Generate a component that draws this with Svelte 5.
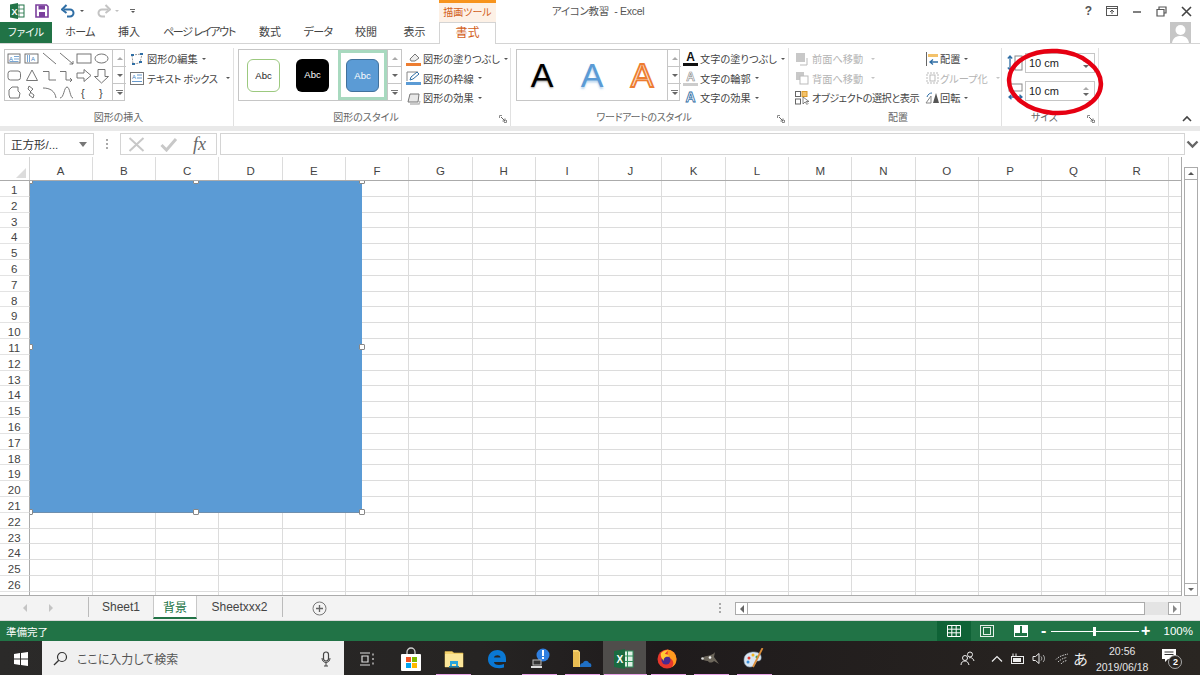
<script lang="ts">
  const tabs = [
    { label: "ホーム", w: 52, ls: -0.6 },
    { label: "挿入", w: 46, ls: 0 },
    { label: "ページ レイアウト", w: 94, ls: -1.3 },
    { label: "数式", w: 48, ls: 0 },
    { label: "データ", w: 48, ls: -0.6 },
    { label: "校閲", w: 48, ls: 0 },
    { label: "表示", w: 49, ls: 0 },
  ];
  const columns = "ABCDEFGHIJKLMNOPQR".split("");
  const rows = Array.from({ length: 27 }, (_, i) => i + 1);
  const dock = [436, 522, 565, 604, 651, 694, 737];
  const handles = [
    [0, 0], [50, 0], [100, 0],
    [0, 50], [100, 50],
    [0, 100], [50, 100], [100, 100],
  ];
</script>

{#snippet launcher()}
  <svg class="launcher" viewBox="0 0 8 8" width="8" height="8">
    <path d="M0.5 3V0.5H3M7.5 5V7.5H5" fill="none" stroke="#8a8a8a" />
    <path d="M2 2l4 4M6 3.5V6H3.5" fill="none" stroke="#666" />
  </svg>
{/snippet}

{#snippet spinner()}
  <div class="spin">
    <div class="spin-btn"><i class="up small"></i></div>
    <div class="spin-btn"><i class="down small"></i></div>
    <div class="spin-btn last"><i class="down small"></i><b></b></div>
  </div>
{/snippet}

<div class="app">
  <header class="titlebar">
    <div class="qat">
      <svg width="16" height="16" viewBox="0 0 16 16" class="xl">
        <rect x="7" y="2" width="8" height="12" fill="#fff" stroke="#217346" />
        <path d="M10 2v12M7 6h8M7 10h8" stroke="#217346" stroke-width=".8" />
        <path d="M1 1.500 9 0v16l-8-1.500z" fill="#217346" />
        <text x="2.500" y="11.500" font-size="9" font-weight="700" fill="#fff" font-family="Liberation Sans">X</text>
      </svg>
      <svg width="14" height="14" viewBox="0 0 14 14" class="save">
        <path d="M1 1h10.500L13 2.500V13H1z" fill="#fff" stroke="#7b3f9d" stroke-width="1.600" />
        <rect x="3.500" y="1.500" width="6.500" height="4" fill="#7b3f9d" />
        <rect x="4" y="8" width="6" height="5" fill="#7b3f9d" />
      </svg>
      <svg width="15" height="14" viewBox="0 0 15 14" class="undo">
        <path d="M3 5.500h6a3.500 3.500 0 0 1 0 7H6" fill="none" stroke="#2f6ea5" stroke-width="2" />
        <path d="M5.500 1 1 5.500 5.500 9" fill="none" stroke="#2f6ea5" stroke-width="2" />
      </svg>
      <i class="down tiny dark"></i>
      <svg width="15" height="14" viewBox="0 0 15 14" class="redo">
        <path d="M12 5.500H6a3.500 3.500 0 0 0 0 7h3" fill="none" stroke="#c4c4c4" stroke-width="2" />
        <path d="M9.500 1 14 5.500 9.500 9" fill="none" stroke="#c4c4c4" stroke-width="2" />
      </svg>
      <i class="down tiny"></i>
      <span class="custom"><b></b><i class="down tiny dark"></i></span>
    </div>
    <div class="context-tab">描画ツール</div>
    <div class="doc-title">アイコン教習 &nbsp;- Excel</div>
    <div class="win-buttons">
      <span class="help">?</span>
      <svg width="12" height="10" viewBox="0 0 12 10"><rect x=".5" y=".5" width="11" height="9" fill="none" stroke="#555" /><path d="M.5 2.500h11M6 8V4M4 6l2-2 2 2" fill="none" stroke="#555" /></svg>
      <svg width="10" height="10" viewBox="0 0 10 10"><path d="M1 6h8" stroke="#555" stroke-width="1.500" /></svg>
      <svg width="11" height="11" viewBox="0 0 11 11"><path d="M3 3V1h7v6H8M1 3.500h7v6.500H1z" fill="none" stroke="#555" stroke-width="1.200" /></svg>
      <svg width="11" height="11" viewBox="0 0 11 11"><path d="M1 1l9 9M10 1l-9 9" stroke="#444" stroke-width="1.600" /></svg>
    </div>
  </header>

  <nav class="tabbar">
    <div class="tab-file">ファイル</div>
    <div class="tab-gap"></div>
    {#each tabs as t}
      <div class="tab" style="width:{t.w}px;letter-spacing:{t.ls}px">{t.label}</div>
    {/each}
    <div class="tab-format">書式</div>
    <div class="account">
      <svg width="21" height="21" viewBox="0 0 21 21">
        <rect width="21" height="21" fill="#c6c6c6" />
        <circle cx="10.500" cy="8" r="5" fill="#fff" />
        <path d="M2 21c1-6 5-7 8.500-7s7.500 1 8.500 7z" fill="#fff" />
      </svg>
    </div>
  </nav>

  <section class="ribbon">
    <div class="group g-insert">
      <div class="group-body">
        <div class="gallery shapes">
          <svg width="107" height="50" viewBox="5 50 107 50" fill="none" stroke="#666" stroke-width=".9">
            <rect x="8" y="54" width="12" height="9" />
            <text x="9" y="60.500" font-size="6" fill="#3f7fbf" stroke="none" font-family="Liberation Sans">A</text>
            <path d="M14 56.500h5M14 59h5M9.500 61.500h9" stroke="#3f7fbf" stroke-width=".7" />
            <rect x="25" y="54" width="13" height="9" />
            <text x="31" y="60.500" font-size="6" fill="#3f7fbf" stroke="none" font-family="Liberation Sans">A</text>
            <path d="M27.500 55v7M29.500 55v7" stroke="#3f7fbf" stroke-width=".7" />
            <path d="M43 53l13 11M60 53l13 11M73 64h-3.500M73 64v-3" />
            <rect x="77" y="54" width="14" height="9" />
            <ellipse cx="101.500" cy="58.500" rx="6.500" ry="4.500" />
            <rect x="8" y="71" width="12.500" height="9" rx="2.500" />
            <path d="M32 70l5.500 10.500h-11z" />
            <path d="M43 71.500h6v8.500h7M60 71.500h6v8.500h6M72 80l-2-2M72 80l-2 2" />
            <path d="M77 73h7v-3.500l7 6-7 6V78h-7z" />
            <path d="M98 69.500h7v7h3.500l-7 6.500-7-6.500H98z" />
            <path d="M9 90l3-3h6v4l2 2-1 5H10l-1-3z" />
            <path d="M29 86l4 3-3 3 4 3-1 3-4-3 2-3-3-3z" />
            <path d="M43 88c7 0 12 3 13 10M60 98c4 0 4-11 7-11s3 11 6 11" />
            <text x="81" y="97" font-size="11" fill="#444" stroke="none" font-family="Liberation Sans">&#123;</text>
            <text x="99" y="97" font-size="11" fill="#444" stroke="none" font-family="Liberation Sans">&#125;</text>
          </svg>
          {@render spinner()}
        </div>
        <div class="btn-col">
          <div class="btn">
            <svg class="ico" width="14" height="14" viewBox="0 0 14 14"><path d="M2 3l10-1-2 9-7 1z" fill="none" stroke="#999" stroke-dasharray="2 1" /><path d="M1 2h3v2H1zM10 1h3v2h-3zM2 11h3v2H2zM9 9h3v2H9z" fill="#2f6ea5" /></svg>
            <span>図形の編集</span><i class="down tiny dark"></i>
          </div>
          <div class="btn">
            <svg class="ico" width="14" height="13" viewBox="0 0 14 13"><rect x=".5" y=".5" width="13" height="12" fill="#fff" stroke="#777" /><text x="2" y="7" font-size="6" fill="#3f7fbf" font-family="Liberation Sans">A</text><path d="M7 3h5M7 6h5M2 9.500h10" stroke="#3f7fbf" stroke-width=".8" /></svg>
            <span class="tight">テキスト ボックス</span><i class="down tiny dark gapped"></i>
          </div>
        </div>
      </div>
      <div class="group-label">図形の挿入</div>
    </div>

    <div class="group g-style">
      <div class="group-body">
        <div class="gallery styles">
          <div class="abc outline">Abc</div>
          <div class="abc black">Abc</div>
          <div class="abc-sel"><div class="abc blue">Abc</div></div>
          {@render spinner()}
        </div>
        <div class="btn-col">
          <div class="btn">
            <svg class="ico" width="15" height="14" viewBox="0 0 15 14"><path d="M4 7l5-5 4 4-4 3H5z" fill="#eee" stroke="#777" /><rect y="11" width="15" height="3" fill="#ed7d31" /></svg>
            <span>図形の塗りつぶし</span><i class="down tiny dark"></i>
          </div>
          <div class="btn">
            <svg class="ico" width="15" height="14" viewBox="0 0 15 14"><path d="M1 10V1h11" fill="none" stroke="#888" /><path d="M4 9l1-3 6-5 2 2-6 5z" fill="#fff" stroke="#2f6ea5" /><rect y="11" width="15" height="3" fill="#5b9bd5" /></svg>
            <span>図形の枠線</span><i class="down tiny dark"></i>
          </div>
          <div class="btn">
            <svg class="ico" width="15" height="14" viewBox="0 0 15 14"><path d="M2 11l2-8h9l-1 8z" fill="#e8e8e8" stroke="#777" /><path d="M4 13h9l1-3" fill="none" stroke="#bbb" stroke-width="1.500" /></svg>
            <span>図形の効果</span><i class="down tiny dark"></i>
          </div>
        </div>
      </div>
      <div class="group-label pad">図形のスタイル</div>
      {@render launcher()}
    </div>

    <div class="group g-art">
      <div class="group-body">
        <div class="gallery arts">
          <span class="art a-black">A</span>
          <span class="art a-blue">A</span>
          <span class="art a-orange">A</span>
          {@render spinner()}
        </div>
        <div class="btn-col">
          <div class="btn">
            <span class="ico letter"><em>A</em><u class="bar-black"></u></span>
            <span>文字の塗りつぶし</span><i class="down tiny dark"></i>
          </div>
          <div class="btn">
            <span class="ico letter"><em class="ghost">A</em><u class="bar-gray"></u></span>
            <span>文字の輪郭</span><i class="down tiny dark"></i>
          </div>
          <div class="btn">
            <span class="ico letter"><em class="glow">A</em></span>
            <span>文字の効果</span><i class="down tiny dark"></i>
          </div>
        </div>
      </div>
      <div class="group-label pad tight">ワードアートのスタイル</div>
      {@render launcher()}
    </div>

    <div class="group g-arrange">
      <div class="group-body">
        <div class="btn-col col-a">
          <div class="btn off">
            <svg class="ico" width="15" height="14" viewBox="0 0 15 14"><rect x="1" y="1" width="9" height="9" fill="#c8c8c8" /><path d="M12 6v7H5" fill="none" stroke="#bbb" /></svg>
            <span>前面へ移動</span><i class="down tiny off-c"></i>
          </div>
          <div class="btn off">
            <svg class="ico" width="15" height="14" viewBox="0 0 15 14"><rect x="1" y="1" width="8" height="8" fill="#c8c8c8" /><rect x="5" y="5" width="8" height="8" fill="#fff" stroke="#bbb" /></svg>
            <span>背面へ移動</span><i class="down tiny off-c"></i>
          </div>
          <div class="btn">
            <svg class="ico" width="15" height="14" viewBox="0 0 15 14"><rect x=".5" y=".5" width="5" height="5" fill="none" stroke="#666" /><rect x=".5" y="8" width="5" height="5" fill="none" stroke="#666" /><rect x="7" y=".5" width="5" height="5" fill="#f3c26b" stroke="#d99a2b" /><path d="M8 6v7l2-2 2 2.500 1-1-2-2h3z" fill="#fff" stroke="#555" stroke-width=".7" /></svg>
            <span class="tighter">オブジェクトの選択と表示</span>
          </div>
        </div>
        <div class="btn-col col-b">
          <div class="btn">
            <svg class="ico" width="15" height="14" viewBox="0 0 15 14"><path d="M1.500 0v14" stroke="#666" /><rect x="3" y="2" width="10" height="3" fill="#f3c26b" /><path d="M13 10H5M8 7.500 5 10l3 2.500" fill="none" stroke="#2f6ea5" stroke-width="1.300" /></svg>
            <span>配置</span><i class="down tiny dark"></i>
          </div>
          <div class="btn off">
            <svg class="ico" width="15" height="14" viewBox="0 0 15 14"><rect x="2" y="2" width="11" height="10" fill="none" stroke="#bbb" stroke-dasharray="2 1" /><rect x="5" y="4" width="5" height="6" fill="none" stroke="#bbb" /></svg>
            <span>グループ化</span><i class="down tiny off-c"></i>
          </div>
          <div class="btn">
            <svg class="ico" width="15" height="14" viewBox="0 0 15 14"><path d="M1 12l5-7v7z" fill="none" stroke="#888" /><path d="M8 12l3-10 3 10z" fill="#555" /><path d="M2 6c1-3 3-4 5-4" fill="none" stroke="#2f6ea5" /></svg>
            <span>回転</span><i class="down tiny dark"></i>
          </div>
        </div>
      </div>
      <div class="group-label">配置</div>
    </div>

    <div class="group g-size">
      <div class="size-fields">
        <div class="size-row">
          <svg width="17" height="20" viewBox="0 0 17 20"><path d="M3 3v14M.8 5.500 3 3l2.200 2.500M.8 14.500 3 17l2.200-2.500" fill="none" stroke="#2f6ea5" stroke-width="1.300" /><rect x="8" y="3" width="7" height="14" fill="#fff" stroke="#888" /></svg>
          <div class="num"><span>10 cm</span><div class="num-spin"><i class="up small"></i><i class="down small"></i></div></div>
        </div>
        <div class="size-row">
          <svg width="17" height="20" viewBox="0 0 17 20"><path d="M2 12h13M4.500 9.800 2 12l2.500 2.200M12.500 9.800 15 12l-2.500 2.200" transform="translate(0 4)" fill="none" stroke="#2f6ea5" stroke-width="1.300" /><rect x="2" y="3" width="13" height="7" fill="#fff" stroke="#888" /></svg>
          <div class="num"><span>10 cm</span><div class="num-spin"><i class="up small"></i><i class="down small"></i></div></div>
        </div>
      </div>
      <div class="group-label pad">サイズ</div>
      {@render launcher()}
    </div>

    <svg class="collapse" width="10" height="7" viewBox="0 0 10 7"><path d="M1 6l4-4 4 4" fill="none" stroke="#444" stroke-width="1.600" /></svg>

    <!-- hand-drawn annotation over the size fields -->
    <svg class="annotation" width="104" height="76" viewBox="0 0 104 76">
      <ellipse cx="51" cy="35" rx="46" ry="31" transform="rotate(4 51 35)" fill="none" stroke="#e60012" stroke-width="4.500" />
    </svg>
  </section>

  <div class="ribbon-edge"></div>

  <section class="formula">
    <div class="namebox"><span>正方形/...</span><i class="down"></i></div>
    <div class="dots"><b></b><b></b><b></b></div>
    <div class="fx-box">
      <svg width="17" height="15" viewBox="0 0 17 15"><path d="M1.500 1l14 13M15.500 1l-14 13" stroke="#c8c8c8" stroke-width="2" /></svg>
      <svg width="18" height="15" viewBox="0 0 18 15"><path d="M1.500 8l5 5L16 2" fill="none" stroke="#c8c8c8" stroke-width="3" /></svg>
      <span class="fx">fx</span>
    </div>
    <div class="formula-input"></div>
    <svg class="formula-caret" width="13" height="9" viewBox="0 0 13 9"><path d="M1.500 1.500 6.500 6.500l5-5" fill="none" stroke="#666" stroke-width="2.400" /></svg>
  </section>

  <main class="sheet">
    <div class="grid-wrap">
      <div class="col-head">
        <div class="corner"><svg width="10" height="10" viewBox="0 0 10 10"><path d="M10 0v10H0z" fill="#dcdcdc" /></svg></div>
        {#each columns as c}
          <div class="col">{c}</div>
        {/each}
        <div class="col rest"></div>
      </div>
      <div class="grid">
        {#each rows as r}
          <div class="row">
            <div class="row-head">{r < 27 ? r : ""}</div>
            {#each columns as c}
              <div class="cell"></div>
            {/each}
            <div class="cell rest"></div>
          </div>
        {/each}
      </div>
      <!-- cells pane: clips the handles at the header edges -->
      <div class="pane">
        <div class="shape">
          {#each handles as h}
            <span class="handle" style="left:{h[0]}%;top:{h[1]}%"></span>
          {/each}
        </div>
      </div>
    </div>
    <aside class="vscroll">
      <div class="sb-btn"><i class="up small dark"></i></div>
      <div class="sb-track"></div>
      <div class="sb-btn"><i class="down small dark"></i></div>
    </aside>
  </main>

  <section class="sheetbar">
    <div class="nav-arrows">
      <i class="left"></i>
      <i class="right"></i>
    </div>
    <div class="sheet-tab sep">Sheet1</div>
    <div class="sheet-tab active">背景</div>
    <div class="sheet-tab sep-r">Sheetxxx2</div>
    <div class="add-sheet">
      <svg width="15" height="15" viewBox="0 0 15 15"><circle cx="7.500" cy="7.500" r="6.500" fill="none" stroke="#777" /><path d="M7.500 4v7M4 7.500h7" stroke="#666" stroke-width="1.300" /></svg>
    </div>
    <div class="dots bar-dots"><b></b><b></b><b></b></div>
    <div class="hscroll">
      <div class="sb-btn h"><i class="left dark"></i></div>
      <div class="h-thumb"></div>
      <div class="h-track"></div>
      <div class="sb-btn h"><i class="right dark"></i></div>
    </div>
  </section>

  <footer class="status">
    <span class="ready">準備完了</span>
    <div class="view active-view">
      <svg width="14" height="12" viewBox="0 0 14 12"><path d="M.5.500h13v11H.5zM.5 4.200h13M.5 7.800h13M4.800.500v11M9.200.500v11" fill="none" stroke="#fff" /></svg>
    </div>
    <div class="view">
      <svg width="14" height="12" viewBox="0 0 14 12"><rect x=".5" y=".5" width="13" height="11" fill="none" stroke="#e4efe8" /><rect x="3.500" y="2.500" width="7" height="7" fill="none" stroke="#e4efe8" /></svg>
    </div>
    <div class="view">
      <svg width="14" height="12" viewBox="0 0 14 12"><rect x=".5" y=".5" width="13" height="11" fill="none" stroke="#fff" /><path d="M1 1h5v7H1zM8 1h5v7H8z" fill="#fff" /></svg>
    </div>
    <span class="zoom-sign">-</span>
    <div class="slider"><b></b></div>
    <span class="zoom-sign">+</span>
    <span class="pct">100%</span>
  </footer>

  <div class="taskbar">
    <div class="start">
      <svg width="14" height="14" viewBox="0 0 14 14"><path d="M0 2l6-.9V6.500H0zM7 1l7-1v6.500H7zM0 7.500h6v5.400l-6-.9zM7 7.500h7V14l-7-1z" fill="#fff" /></svg>
    </div>
    <div class="search">
      <svg width="15" height="15" viewBox="0 0 15 15"><circle cx="9" cy="6" r="4.500" fill="none" stroke="#333" stroke-width="1.200" /><path d="M5.800 9.200 1 14" stroke="#333" stroke-width="1.300" /></svg>
      <span>ここに入力して検索</span>
      <svg class="mic" width="10" height="16" viewBox="0 0 10 16"><rect x="2.500" y="1" width="5" height="9" rx="2.500" fill="none" stroke="#444" stroke-width="1.200" /><path d="M1 7c0 6 8 6 8 0M5 12v3M3 15h4" fill="none" stroke="#444" /></svg>
    </div>
    <div class="task t-view">
      <svg width="16" height="14" viewBox="0 0 16 14"><path d="M1 1h10M1 13h10M3 4h6v6H3zM14 1.500v2M14 6v2M14 10.500v2" fill="none" stroke="#ddd" stroke-width="1.200" /></svg>
    </div>
    <div class="task t-store">
      <svg width="20" height="24" viewBox="0 0 20 24">
        <path d="M6 7V5a4 4 0 0 1 8 0v2" fill="none" stroke="#cfcfcf" stroke-width="1.300" />
        <rect y="7" width="20" height="17" rx="1" fill="#fff" />
        <rect x="5" y="10" width="5" height="5" fill="#f25022" /><rect x="11" y="10" width="5" height="5" fill="#7fba00" />
        <rect x="5" y="16" width="5" height="5" fill="#00a4ef" /><rect x="11" y="16" width="5" height="5" fill="#ffb900" />
      </svg>
    </div>
    <div class="task t-a">
      <svg width="20" height="18" viewBox="0 0 20 18">
        <path d="M1 3V1.500h7L10 3h9v14H1z" fill="#f5d46f" stroke="#d9b24c" stroke-width=".6" />
        <rect x="1" y="4" width="18" height="13" fill="#fbe69a" />
        <path d="M6 11h8v5h-2v-2H8v2H6z" fill="#2aa5dc" />
        <rect x="5" y="16" width="10" height="1.500" fill="#1c7fb2" />
      </svg>
    </div>
    <div class="task">
      <svg width="20" height="20" viewBox="0 0 20 20"><path d="M18 13H7c0 3 5 4 10 2v3.500C10 20.500 1 18 1 10.500 1 4 6 1 10.500 1 16 1 19 5 19 10v3zM7 8.500h6.500c0-3-6-3-6.500 0z" fill="#0a78d4" /></svg>
    </div>
    <div class="task">
      <svg width="20" height="21" viewBox="0 0 20 21">
        <circle cx="13" cy="7" r="6.500" fill="#2f7fe0" />
        <rect x="12" y="2" width="2" height="6" fill="#fff" /><rect x="12" y="9" width="2" height="2" fill="#fff" />
        <rect x="3" y="12" width="8" height="5" fill="#333" stroke="#bbb" />
        <rect x="1" y="18" width="11" height="2" fill="#ddd" />
      </svg>
    </div>
    <div class="task t-onedrive">
      <svg width="20" height="20" viewBox="0 0 20 20">
        <path d="M1 1h5l2 2v15H1z" fill="#f3cf6d" />
        <rect x="1" y="3" width="6" height="15" fill="#e9bd52" />
        <path d="M8 18c0-3 1-4 3-4 1-3 5-3 6 0 2 0 3 2 2 4z" fill="#1f6fc4" />
      </svg>
    </div>
    <div class="task t-active">
      <svg width="20" height="20" viewBox="0 0 20 20">
        <rect x="8" y="2" width="11" height="16" fill="#dff0e5" stroke="#2f8f5b" />
        <path d="M13.500 2v16M8 7h11M8 12.500h11" stroke="#2f8f5b" />
        <path d="M0 2 11 0v20L0 18z" fill="#1b6b40" />
        <text x="2.500" y="13.500" font-size="10" font-weight="700" fill="#fff" font-family="Liberation Sans">X</text>
      </svg>
    </div>
    <div class="task">
      <svg width="20" height="20" viewBox="0 0 20 20">
        <circle cx="10" cy="10" r="9.500" fill="#e8372c" />
        <path d="M10 .500a9.500 9.500 0 0 1 9.500 9.500c0 4-2 7-5 8.500 2-2 2.500-5 1-7-1-2-4-3-6-2 1-3 2-6 .5-9z" fill="#ff9a1f" />
        <circle cx="9" cy="11" r="4.500" fill="#4a2a8f" />
        <path d="M4 4c2-2 4-3 7-3-1 2-3 3-3 4 2 0 4 1 4 3-3-1-6 1-5 4-2-2-4-5-3-8z" fill="#ffc933" />
      </svg>
    </div>
    <div class="task">
      <svg width="20" height="16" viewBox="0 0 20 16">
        <path d="M6 5c3-1 6-1 8-4l-1 5 5 7-5-3c-2 2-5 2-6 0-1 0-3 0-6-2 1-2 3-3 5-3z" fill="#6d675c" />
        <circle cx="9" cy="6.500" r="1.300" fill="#fff" /><circle cx="1.500" cy="7.500" r="1.300" fill="#ddd" />
      </svg>
    </div>
    <div class="task">
      <svg width="21" height="21" viewBox="0 0 21 21">
        <path d="M1 12C1 6 6 4 11 4c5 0 8 3 7 7-1 3-4 1-5 3-1 3-3 5-6 5-4 0-6-3-6-7z" fill="#d9e6f2" stroke="#8aa3b8" stroke-width=".6" />
        <circle cx="6" cy="10" r="1.500" fill="#e03c31" /><circle cx="10" cy="7" r="1.500" fill="#f2b61f" /><circle cx="5" cy="14" r="1.500" fill="#3b8fd8" /><circle cx="14" cy="9" r="1.500" fill="#46a546" />
        <path d="M19.500 0 10 19" stroke="#d98d3a" stroke-width="1.800" />
      </svg>
    </div>
    <div class="tray">
      <svg class="t-people" width="15" height="15" viewBox="0 0 15 15"><circle cx="10" cy="3.500" r="2.500" fill="none" stroke="#eee" /><circle cx="5" cy="7" r="2.500" fill="none" stroke="#eee" /><path d="M1 14c0-3 2-4 4-4s3 1 4 4M9 7c2-1 4 0 5 3" fill="none" stroke="#eee" /></svg>
      <svg class="t-up" width="12" height="7" viewBox="0 0 12 7"><path d="M1 6.500 6 1.500l5 5" fill="none" stroke="#eee" stroke-width="1.200" /></svg>
      <svg class="t-batt" width="14" height="12" viewBox="0 0 14 12"><rect x=".5" y="3.500" width="12" height="7" fill="none" stroke="#eee" /><rect x="2" y="5" width="8" height="4" fill="#eee" /><path d="M2 .5v3M5 .5v3" stroke="#eee" /></svg>
      <svg class="t-vol" width="14" height="13" viewBox="0 0 14 13"><path d="M1 4.500h2.500L7 1.500v10l-3.500-3H1z" fill="none" stroke="#eee" /><path d="M9 4.500c1 1 1 3 0 4M11 3c2 2 2 5 0 7" fill="none" stroke="#bbb" /></svg>
      <svg class="t-wifi" width="14" height="13" viewBox="0 0 14 13"><path d="M1 7.500C4 4 9 3 13 2M3 10c2-2 5-4 9-4.500M6 12c1-1.500 3-3 6-3.500" fill="none" stroke="#cfcfcf" stroke-dasharray="1.500 1" /></svg>
      <span class="ime">あ</span>
      <div class="clock"><span>20:56</span><span>2019/06/18</span></div>
      <div class="notify">
        <svg width="14" height="13" viewBox="0 0 14 13"><path d="M0 0h14v10H6l-3 3v-3H0z" fill="#fff" /><path d="M2.500 3h9M2.500 5.500h9" stroke="#333" /></svg>
        <span>2</span>
      </div>
    </div>
    {#each dock as x}
      <span class="dock-mark" style="left:{x}px;width:{x === 604 ? 43 : 35}px"></span>
    {/each}
  </div>
</div>

<style>
  :global(body) {
    margin: 0;
    background: #fff;
  }

  .app {
    position: relative;
    width: 1200px;
    height: 675px;
    overflow: hidden;
    display: flex;
    flex-direction: column;
    background: #fff;
    color: #444;
    font-family: "Liberation Sans", "Noto Sans CJK JP", sans-serif;
    font-size: 11px;
    font-feature-settings: "palt";
  }

  /* small triangles */
  i.down,
  i.up,
  i.left,
  i.right {
    display: inline-block;
    width: 0;
    height: 0;
    flex: none;
  }
  i.down {
    border: 4px solid transparent;
    border-top: 5px solid #777;
    border-bottom: 0;
  }
  i.down.tiny {
    border-width: 2px 2px 0;
    border-top-color: #c0c0c0;
    border-style: solid;
    border-left-color: transparent;
    border-right-color: transparent;
    margin-left: 4px;
  }
  i.down.tiny.dark {
    border-top-color: #555;
  }
  i.down.tiny.off-c {
    border-top-color: #c4c4c4;
    margin-left: 8px;
  }
  i.down.tiny.gapped {
    margin-left: 8px;
  }
  i.down.small {
    border-width: 3px 3px 0;
    border-top-color: #666;
  }
  i.up.small {
    border-left: 3px solid transparent;
    border-right: 3px solid transparent;
    border-bottom: 3px solid #aaa;
  }
  i.up.small.dark {
    border-bottom-color: #555;
  }
  i.left,
  i.right {
    border-top: 4px solid transparent;
    border-bottom: 4px solid transparent;
  }
  i.left {
    border-right: 4px solid #c4c4c4;
  }
  i.right {
    border-left: 4px solid #c4c4c4;
  }
  i.left.dark {
    border-right-color: #666;
  }
  i.right.dark {
    border-left-color: #888;
  }

  /* title bar */
  .titlebar {
    height: 22px;
    display: flex;
    flex: none;
    align-items: stretch;
  }
  .qat {
    width: 439px;
    display: flex;
    align-items: center;
    padding-left: 9px;
    box-sizing: border-box;
  }
  .save {
    margin-left: 10px;
  }
  .undo {
    margin-left: 12px;
  }
  .redo {
    margin-left: 12px;
  }
  .custom {
    display: inline-flex;
    flex-direction: column;
    align-items: center;
    gap: 1px;
    margin-left: 11px;
  }
  .custom b {
    width: 5px;
    height: 1px;
    background: #666;
  }
  .custom i.down.tiny {
    margin-left: 0;
  }
  .context-tab {
    width: 57px;
    box-sizing: border-box;
    border-top: 3px solid #f7941d;
    background: #fdf1e6;
    color: #d2601a;
    text-align: center;
    line-height: 19px;
    font-size: 10px;
  }
  .doc-title {
    margin-left: 56px;
    line-height: 22px;
    color: #555;
    font-size: 10.500px;
    letter-spacing: -0.3px;
    white-space: nowrap;
  }
  .win-buttons {
    margin-left: auto;
    display: flex;
    align-items: center;
    gap: 0;
    padding-right: 8px;
  }
  .win-buttons > * {
    margin-left: 14px;
  }
  .help {
    font-weight: 700;
    font-size: 12px;
    color: #555;
  }

  /* tabs */
  .tabbar {
    height: 22px;
    flex: none;
    display: flex;
    align-items: stretch;
    box-sizing: border-box;
    border-bottom: 1px solid #d4d4d4;
    font-size: 11px;
  }
  .tab-file {
    width: 52px;
    height: 21px;
    background: #217346;
    color: #fff;
    text-align: center;
    line-height: 21px;
    font-size: 10.500px;
  }
  .tab-gap {
    width: 2px;
  }
  .tab {
    text-align: center;
    line-height: 21px;
    color: #444;
    white-space: nowrap;
  }
  .tab-format {
    width: 57px;
    height: 22px;
    box-sizing: border-box;
    border: 1px solid #d4d4d4;
    border-bottom: 0;
    background: #fff;
    color: #d2601a;
    text-align: center;
    line-height: 21px;
    font-size: 12px;
  }
  .account {
    margin-left: auto;
    margin-right: 9px;
    height: 21px;
  }

  /* ribbon */
  .ribbon {
    position: relative;
    height: 82px;
    flex: none;
    display: flex;
    box-sizing: border-box;
  }
  .group {
    position: relative;
    height: 78px;
    margin-top: 4px;
    box-sizing: border-box;
    border-right: 1px solid #e1e1e1;
    display: flex;
    flex-direction: column;
    flex: none;
  }
  .g-insert {
    width: 234px;
    padding-left: 4px;
  }
  .g-style {
    width: 277px;
    padding-left: 4px;
  }
  .g-art {
    width: 278px;
    padding-left: 5px;
  }
  .g-arrange {
    width: 213px;
    padding-left: 6px;
  }
  .g-size {
    width: 97px;
    padding-left: 5px;
  }
  .group-body {
    display: flex;
    height: 63px;
    gap: 4px;
    padding-top: 1px;
    box-sizing: border-box;
  }
  .g-insert .group-body {
    gap: 5px;
  }
  .g-art .group-body {
    gap: 3px;
  }
  .group-label {
    text-align: center;
    color: #666;
    font-size: 10px;
    line-height: 14px;
  }
  .group-label.pad {
    padding-right: 16px;
  }
  .group-label.tight {
    letter-spacing: -0.3px;
  }
  .launcher {
    position: absolute;
    right: 3px;
    bottom: 3px;
  }
  .gallery {
    position: relative;
    height: 52px;
    box-sizing: border-box;
    border: 1px solid #c6c6c6;
    display: flex;
    align-items: center;
    flex: none;
  }
  .shapes {
    width: 121px;
  }
  .shapes > svg {
    flex: none;
  }
  .spin {
    margin-left: auto;
    width: 13px;
    height: 50px;
    border-left: 1px solid #c6c6c6;
    display: flex;
    flex-direction: column;
    flex: none;
  }
  .spin-btn {
    flex: 1;
    display: flex;
    flex-direction: column;
    align-items: center;
    justify-content: center;
    gap: 1px;
    border-bottom: 1px solid #c6c6c6;
  }
  .spin-btn.last {
    border-bottom: 0;
    flex-direction: column-reverse;
  }
  .spin-btn b {
    width: 7px;
    height: 1px;
    background: #777;
  }
  .styles {
    width: 164px;
    padding-left: 8px;
  }
  .abc {
    width: 33px;
    height: 33px;
    box-sizing: border-box;
    border-radius: 6px;
    text-align: center;
    line-height: 31px;
    font-size: 9.500px;
    flex: none;
  }
  .outline {
    border: 1px solid #9cc97f;
    color: #222;
  }
  .black {
    background: #000;
    color: #fff;
    margin-left: 16px;
  }
  .abc-sel {
    margin-left: 9px;
    width: 49px;
    height: 50px;
    box-sizing: border-box;
    border: 3px solid #a8d9bf;
    display: flex;
    align-items: center;
    justify-content: center;
    flex: none;
  }
  .blue {
    background: #5b9bd5;
    border: 1px solid #41719c;
    color: #fff;
  }
  .btn-col {
    display: flex;
    flex-direction: column;
    flex: none;
  }
  .btn {
    height: 19.500px;
    display: flex;
    align-items: center;
    white-space: nowrap;
    color: #444;
    font-size: 10.200px;
  }
  .btn.off {
    color: #b4b4b4;
  }
  .tight {
    letter-spacing: -0.4px;
  }
  .tighter {
    letter-spacing: -0.5px;
  }
  .ico {
    flex: none;
    margin-right: 2px;
  }
  .g-insert .ico {
    margin-right: 3px;
  }
  .g-art .gallery {
    width: 164px;
    padding-left: 0;
  }
  .art {
    width: 50px;
    text-align: center;
    font-size: 34px;
    font-weight: 400;
    line-height: 50px;
    flex: none;
    font-family: "Liberation Sans", sans-serif;
  }
  .a-black {
    color: #000;
    text-shadow: 0 1px 2px rgba(0, 0, 0, 0.4);
  }
  .a-blue {
    color: #5b9bd5;
    text-shadow: 0 2px 2px rgba(91, 155, 213, 0.4);
  }
  .a-orange {
    color: #fbe3d3;
    -webkit-text-stroke: 1.800px #ed7d31;
  }
  .letter {
    width: 15px;
    height: 15px;
    display: inline-flex;
    flex-direction: column;
    align-items: center;
  }
  .letter em {
    font-style: normal;
    font-size: 12px;
    font-weight: 700;
    line-height: 12px;
    color: #111;
  }
  .letter em.ghost {
    color: #fff;
    -webkit-text-stroke: 0.600px #888;
  }
  .letter em.glow {
    color: #fff;
    -webkit-text-stroke: 0.800px #2f6ea5;
    font-size: 14px;
    line-height: 15px;
  }
  .letter u {
    display: block;
    width: 15px;
    height: 3px;
  }
  .bar-black {
    background: #111;
  }
  .bar-gray {
    background: #ccc;
  }
  .col-a {
    width: 127px;
  }
  .g-arrange .group-body {
    gap: 3px;
  }
  .col-b .ico {
    margin-right: 0;
  }
  .size-fields {
    height: 63px;
    display: flex;
    flex-direction: column;
    gap: 8px;
    padding-top: 5px;
    box-sizing: border-box;
  }
  .size-row {
    display: flex;
    align-items: center;
    gap: 1px;
  }
  .num {
    width: 70px;
    height: 20px;
    box-sizing: border-box;
    border: 1px solid #c6c6c6;
    display: flex;
    align-items: center;
    justify-content: space-between;
    padding: 0 5px 0 3px;
    color: #222;
    font-size: 11px;
  }
  .num-spin {
    display: flex;
    flex-direction: column;
    gap: 3px;
    align-items: center;
  }
  .collapse {
    position: absolute;
    right: 8px;
    bottom: 4px;
  }
  .annotation {
    position: absolute;
    left: 1004px;
    top: 3px;
  }
  .ribbon-edge {
    height: 5px;
    flex: none;
    background: #e9e9e9;
  }

  /* formula bar */
  .formula {
    height: 26px;
    flex: none;
    display: flex;
    align-items: center;
    padding: 0 0 0 4px;
    box-sizing: border-box;
  }
  .namebox {
    width: 90px;
    height: 22px;
    box-sizing: border-box;
    border: 1px solid #d4d4d4;
    display: flex;
    align-items: center;
    justify-content: space-between;
    padding: 0 6px;
    color: #333;
    font-size: 11.500px;
    flex: none;
  }
  .dots {
    display: flex;
    flex-direction: column;
    gap: 2px;
    width: 26px;
    align-items: center;
    flex: none;
  }
  .dots b {
    width: 2px;
    height: 2px;
    background: #aaa;
  }
  .fx-box {
    width: 97px;
    height: 22px;
    box-sizing: border-box;
    border: 1px solid #d4d4d4;
    display: flex;
    align-items: center;
    gap: 15px;
    padding-left: 7px;
    flex: none;
  }
  .fx-box svg {
    flex: none;
  }
  .fx {
    font-family: "Liberation Serif", serif;
    font-style: italic;
    font-size: 18px;
    color: #666;
  }
  .formula-input {
    margin-left: 3px;
    width: 965px;
    height: 22px;
    box-sizing: border-box;
    border: 1px solid #d4d4d4;
    flex: none;
  }
  .formula-caret {
    margin-left: -1px;
    padding-left: 2px;
    flex: none;
  }

  /* sheet */
  .sheet {
    height: 439px;
    flex: none;
    display: flex;
  }
  .grid-wrap {
    position: relative;
    width: 1182px;
    flex: none;
    overflow: hidden;
    border-right: 1px solid #ababab;
    border-bottom: 1px solid #ababab;
    box-sizing: border-box;
  }
  .col-head {
    height: 24px;
    display: flex;
    box-sizing: border-box;
    border-bottom: 1px solid #ababab;
  }
  .corner {
    width: 29.500px;
    flex: none;
    display: flex;
    align-items: flex-end;
    justify-content: flex-end;
    padding: 0 3px 2px 0;
    box-sizing: border-box;
    border-right: 1px solid #d4d4d4;
  }
  .col {
    width: 63.300px;
    flex: none;
    box-sizing: border-box;
    border-right: 1px solid #dcdcdc;
    text-align: center;
    padding-top: 5px;
    line-height: 18px;
    color: #444;
    font-size: 11.500px;
  }
  .col.rest {
    border-right: 0;
    width: 14px;
  }
  .row {
    height: 15.800px;
    display: flex;
  }
  .row-head {
    width: 29.500px;
    flex: none;
    box-sizing: border-box;
    border-right: 1px solid #ababab;
    border-bottom: 1px solid #e3e3e3;
    text-align: center;
    padding-top: 2px;
    line-height: 14px;
    font-size: 11.500px;
    color: #444;
  }
  .cell {
    width: 63.300px;
    flex: none;
    box-sizing: border-box;
    border-right: 1px solid #dcdcdc;
    border-bottom: 1px solid #dcdcdc;
  }
  .cell.rest {
    width: 14px;
    border-right: 0;
  }
  .pane {
    position: absolute;
    left: 30px;
    top: 24px;
    right: 0;
    bottom: 0;
    overflow: hidden;
  }
  .shape {
    position: relative;
    width: 332px;
    height: 332px;
    background: #5b9bd5;
    box-sizing: border-box;
    border-bottom: 1px solid #6f8fae;
  }
  .handle {
    position: absolute;
    width: 6px;
    height: 6px;
    margin: -3px 0 0 -3px;
    box-sizing: border-box;
    background: #fff;
    border: 1px solid #888;
    border-radius: 1px;
  }
  .vscroll {
    width: 18px;
    flex: none;
    margin-top: 10px;
    padding: 0 2px 0 2px;
    box-sizing: border-box;
    display: flex;
    flex-direction: column;
  }
  .sb-btn {
    height: 13px;
    flex: none;
    box-sizing: border-box;
    border: 1px solid #ababab;
    display: flex;
    align-items: center;
    justify-content: center;
    background: #fff;
  }
  .sb-track {
    flex: 1;
    box-sizing: border-box;
    border-left: 1px solid #ababab;
    border-right: 1px solid #ababab;
  }

  /* sheet tabs */
  .sheetbar {
    height: 25px;
    flex: none;
    display: flex;
    align-items: stretch;
    background: #f3f3f3;
    border-bottom: 1px solid #d8d8d8;
    box-sizing: border-box;
  }
  .nav-arrows {
    width: 88px;
    flex: none;
    box-sizing: border-box;
    padding-left: 23px;
    display: flex;
    align-items: center;
    gap: 22px;
  }
  .sheet-tab {
    display: flex;
    align-items: center;
    justify-content: center;
    color: #444;
    font-size: 12px;
    flex: none;
    height: 20px;
    margin-top: 1px;
  }
  .sep {
    width: 64px;
    border-left: 1px solid #bbb;
  }
  .active {
    width: 44px;
    height: 24px;
    margin-top: -1px;
    box-sizing: border-box;
    background: #fff;
    color: #217346;
    border-left: 1px solid #c8c8c8;
    border-right: 1px solid #c8c8c8;
    border-bottom: 2px solid #217346;
  }
  .sep-r {
    width: 85px;
    border-right: 1px solid #bbb;
  }
  .add-sheet {
    width: 72px;
    flex: none;
    display: flex;
    align-items: center;
    justify-content: center;
  }
  .bar-dots {
    flex: none;
    width: 26px;
    margin-left: 352px;
    justify-content: center;
  }
  .hscroll {
    margin-left: 2px;
    margin-top: 6px;
    height: 13px;
    flex: none;
    display: flex;
  }
  .sb-btn.h {
    width: 13px;
  }
  .h-thumb {
    width: 397px;
    box-sizing: border-box;
    background: #fff;
    border: 1px solid #ababab;
    border-left: 0;
  }
  .h-track {
    width: 23px;
    background: #e4e4e4;
  }

  /* status */
  .status {
    height: 20px;
    flex: none;
    background: #217346;
    color: #fff;
    display: flex;
    align-items: center;
    font-size: 10.500px;
  }
  .ready {
    margin-left: 6px;
    margin-right: auto;
  }
  .view {
    width: 33.500px;
    height: 20px;
    display: flex;
    align-items: center;
    justify-content: center;
  }
  .active-view {
    background: #0f6236;
  }
  .zoom-sign {
    font-size: 16px;
    font-weight: 700;
    width: 12px;
    text-align: center;
    line-height: 18px;
  }
  .slider {
    width: 88px;
    height: 1px;
    background: #fff;
    margin: 0 1px;
    position: relative;
  }
  .slider b {
    position: absolute;
    left: 42px;
    top: -4px;
    width: 3px;
    height: 9px;
    background: #fff;
  }
  .pct {
    margin: 0 7px 0 12px;
    font-size: 11.500px;
  }

  /* taskbar */
  .taskbar {
    position: relative;
    height: 35px;
    flex: none;
    display: flex;
    align-items: center;
    background: linear-gradient(90deg, #2b2a29, #262423 40%, #1f1b1c 55%, #2a2622);
    color: #eee;
  }
  .start {
    width: 42px;
    height: 35px;
    display: flex;
    align-items: center;
    justify-content: center;
    flex: none;
  }
  .search {
    width: 302px;
    height: 35px;
    box-sizing: border-box;
    background: #f0f0f0;
    display: flex;
    align-items: center;
    padding-left: 11px;
    color: #444;
    font-size: 12px;
    flex: none;
  }
  .search span {
    margin-left: 9px;
    color: #555;
  }
  .mic {
    margin-left: auto;
    margin-right: 13px;
  }
  .task {
    width: 43.200px;
    height: 35px;
    display: flex;
    align-items: center;
    justify-content: center;
    flex: none;
  }
  .t-view {
    width: 45px;
  }
  .t-store {
    width: 43px;
  }
  .t-onedrive {
    width: 41px;
  }
  .t-active {
    background: #4f4d4b;
  }
  .tray {
    flex: 1;
    display: flex;
    align-items: center;
    height: 35px;
    min-width: 0;
  }
  .tray > svg {
    flex: none;
  }
  .t-people {
    margin-left: 185px;
  }
  .t-up {
    margin-left: 16px;
  }
  .t-batt {
    margin-left: 8px;
  }
  .t-vol {
    margin-left: 7px;
  }
  .t-wifi {
    margin-left: 9px;
  }
  .ime {
    margin-left: 4px;
    font-size: 15px;
    color: #eee;
  }
  .clock {
    margin-left: 8px;
    display: flex;
    flex-direction: column;
    align-items: center;
    font-size: 10.500px;
    line-height: 16px;
    color: #e6e6e6;
    white-space: nowrap;
  }
  .notify {
    position: relative;
    margin-left: 14px;
    width: 20px;
    height: 20px;
  }
  .notify svg {
    position: absolute;
    left: 0;
    top: 0;
  }
  .notify span {
    position: absolute;
    left: 6px;
    top: 6px;
    width: 14px;
    height: 14px;
    box-sizing: border-box;
    border: 1px solid #aaa;
    border-radius: 50%;
    background: #2a2622;
    color: #fff;
    font-size: 9px;
    font-weight: 700;
    text-align: center;
    line-height: 12px;
  }
  .dock-mark {
    position: absolute;
    bottom: 0;
    height: 2px;
    background: #e7a2e7;
  }
</style>
